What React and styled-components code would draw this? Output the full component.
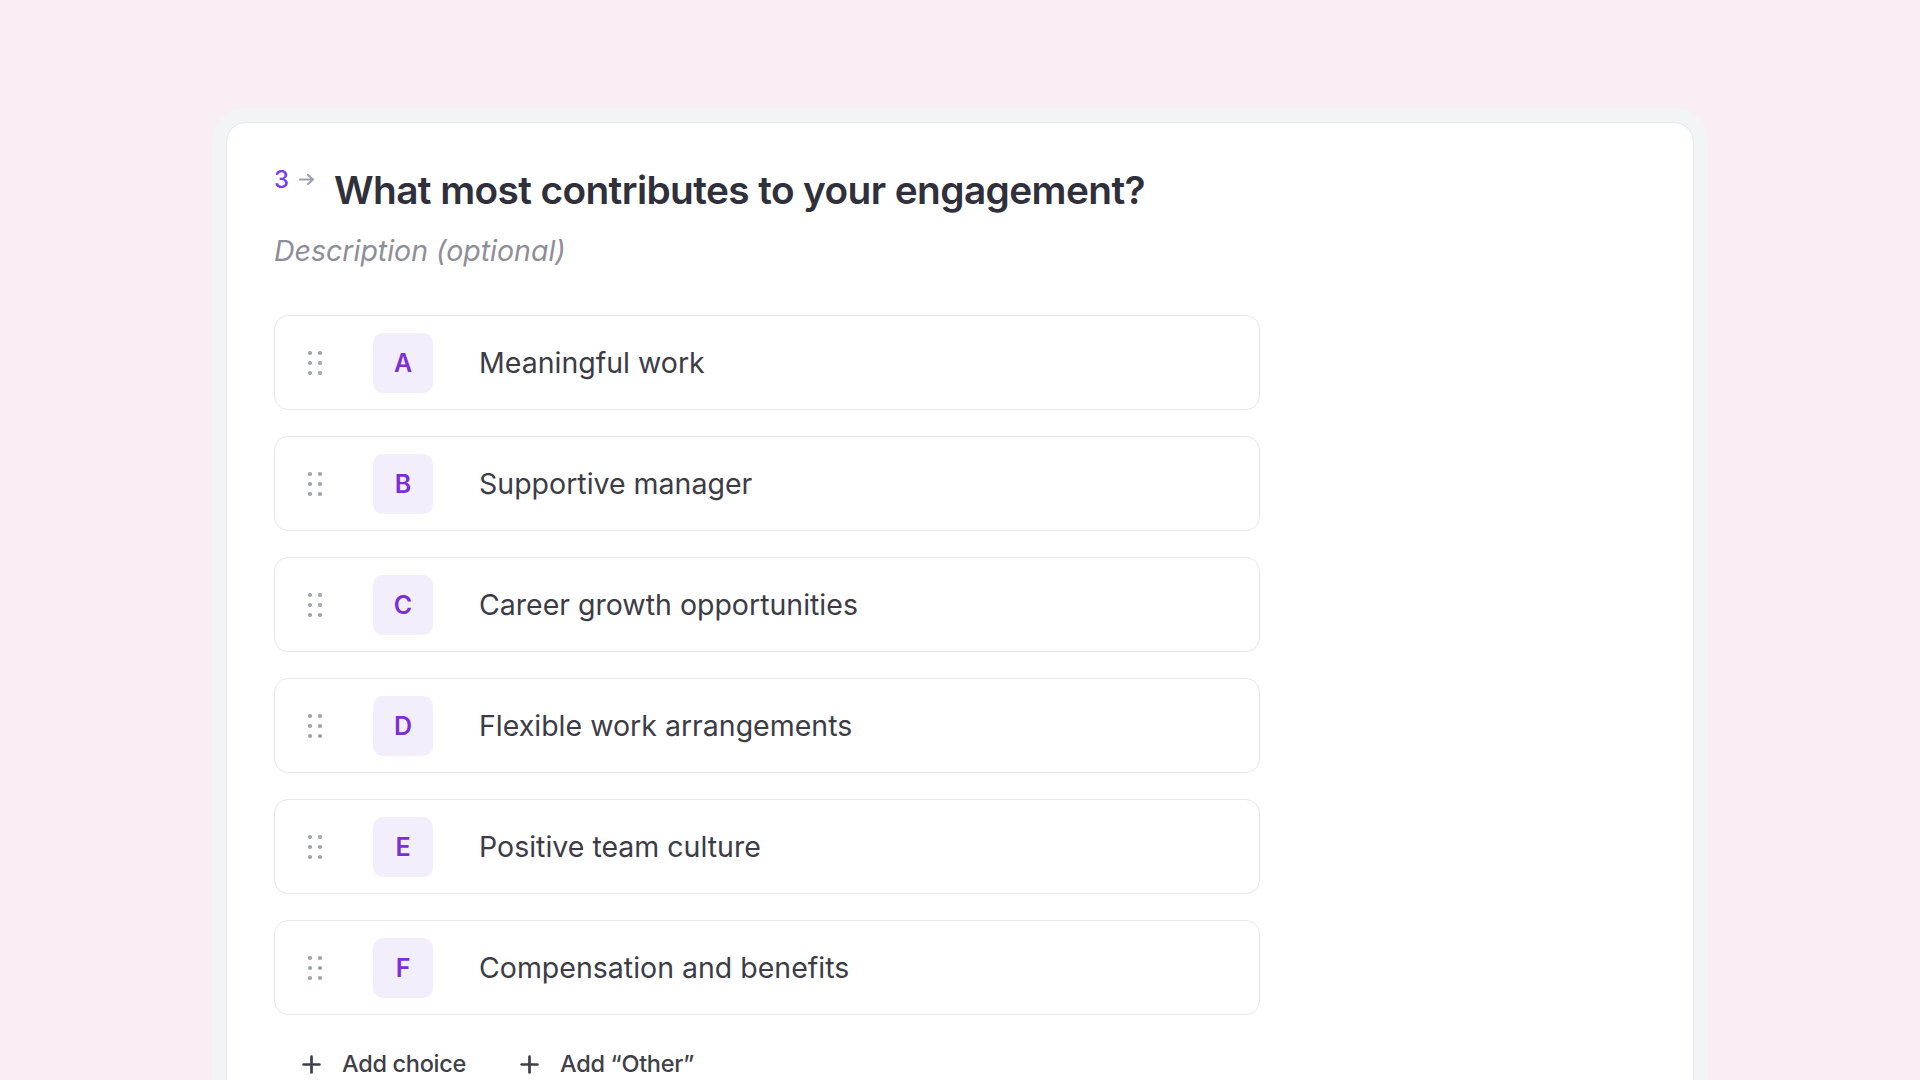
import React from "react";
import styled, { createGlobalStyle } from "styled-components";
import { Plus } from "lucide-react";

const GlobalStyle = createGlobalStyle`
  html, body { margin: 0; padding: 0; }
  body {
    background: #f9eef4;
    font-family: Inter, "Noto Sans", sans-serif;
    overflow: hidden;
  }
`;

const Page = styled.div`
  height: 1080px;
  padding-top: 108px;
  box-sizing: border-box;
  overflow: hidden;
`;

const Frame = styled.div`
  width: 1496px;
  margin: 0 auto;
  padding: 14px 14px 0;
  box-sizing: border-box;
  background: #f3f4f6;
  border-radius: 32px 32px 0 0;
`;

const Card = styled.div`
  background: #ffffff;
  border: 1px solid #e7e8ec;
  border-bottom: none;
  border-radius: 20px 20px 0 0;
  padding: 43px 47px 80px;
  min-height: 1000px;
`;

const TitleRow = styled.div`
  display: flex;
  align-items: flex-start;
  height: 48px;
`;

const Number = styled.span`
  font-size: 24px;
  font-weight: 500;
  color: #7c3aed;
  line-height: 22px;
  margin-top: 3px;
`;

const Arrow = styled.span`
  display: flex;
  margin: 7px 19px 0 10px;
  color: #9ca3af;
`;

const Title = styled.h1`
  margin: 0;
  font-size: 38.8px;
  font-weight: 600;
  letter-spacing: -0.6px;
  line-height: 48px;
  color: #30303c;
`;

const Description = styled.div`
  margin-top: 19px;
  font-size: 28.5px;
  font-style: italic;
  line-height: 36px;
  letter-spacing: 0;
  color: #8e8e98;
`;

const Choices = styled.div`
  margin-top: 46px;
  width: 986px;
  display: flex;
  flex-direction: column;
  gap: 26px;
`;

const Choice = styled.div`
  height: 95px;
  box-sizing: border-box;
  border: 1.5px solid #e6e7eb;
  border-radius: 14px;
  display: flex;
  align-items: center;
  padding-left: 32px;
`;

const Handle = styled.svg`
  width: 16px;
  height: 26px;
  margin-right: 50px;
  flex: none;
`;

const Badge = styled.div`
  width: 60px;
  height: 60px;
  border-radius: 10px;
  background: #f2eefb;
  color: #7e2ed6;
  font-size: 25px;
  font-weight: 600;
  display: flex;
  align-items: center;
  justify-content: center;
  flex: none;
`;

const ChoiceText = styled.span`
  margin-left: 46px;
  font-size: 28.5px;
  letter-spacing: 0;
  color: #3c3c46;
`;

const Actions = styled.div`
  margin-top: 34px;
  display: flex;
  align-items: center;
  gap: 50px;
  padding-left: 24px;
`;

const ActionButton = styled.button`
  display: flex;
  align-items: center;
  gap: 17px;
  border: none;
  background: none;
  padding: 0;
  font-family: inherit;
  font-size: 23.5px;
  font-weight: 500;
  letter-spacing: -0.3px;
  color: #3f3f48;
  line-height: 30px;
  cursor: pointer;
`;

const DragDots = () => (
  <Handle viewBox="0 0 16 26">
    {[3, 13].map((x) =>
      [3, 13, 23].map((y) => (
        <circle key={`${x}-${y}`} cx={x} cy={y} r="2.1" fill="#9ea3ab" />
      ))
    )}
  </Handle>
);

const choices = [
  ["A", "Meaningful work"],
  ["B", "Supportive manager"],
  ["C", "Career growth opportunities"],
  ["D", "Flexible work arrangements"],
  ["E", "Positive team culture"],
  ["F", "Compensation and benefits"],
];

export default function App() {
  return (
    <>
      <GlobalStyle />
      <Page>
        <Frame>
          <Card>
            <TitleRow>
              <Number>3</Number>
              <Arrow>
                <svg width="16" height="13" viewBox="0 0 16 13" fill="none">
                  <path
                    d="M1 6.5h13M9 2l5 4.5L9 11"
                    stroke="currentColor"
                    strokeWidth="2.2"
                    strokeLinecap="round"
                    strokeLinejoin="round"
                  />
                </svg>
              </Arrow>
              <Title>What most contributes to your engagement?</Title>
            </TitleRow>
            <Description>Description (optional)</Description>
            <Choices>
              {choices.map(([letter, text]) => (
                <Choice key={letter}>
                  <DragDots />
                  <Badge>{letter}</Badge>
                  <ChoiceText>{text}</ChoiceText>
                </Choice>
              ))}
            </Choices>
            <Actions>
              <ActionButton>
                <Plus size={27} strokeWidth={2.4} />
                Add choice
              </ActionButton>
              <ActionButton>
                <Plus size={27} strokeWidth={2.4} />
                Add “Other”
              </ActionButton>
            </Actions>
          </Card>
        </Frame>
      </Page>
    </>
  );
}
